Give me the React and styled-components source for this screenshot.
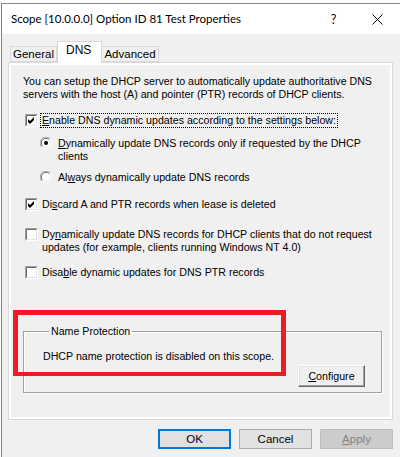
import React from "react";
import styled, { createGlobalStyle } from "styled-components";

const GlobalStyle = createGlobalStyle`
  html, body {
    margin: 0;
    padding: 0;
    background: #ffffff;
  }
  body {
    font-family: "Liberation Sans", Arial, sans-serif;
    font-size: 10.65px;
    color: #000;
  }
`;

const Window = styled.div`
  margin: 3px 0 0 1px;
  height: 454px;
  border-top: 1px solid #8a8a8a;
  border-left: 1px solid #808080;
  background: #f0f0f0;
  display: flex;
  flex-direction: column;
  box-sizing: border-box;
`;

const TitleBar = styled.div`
  height: 30px;
  background: #ffffff;
  display: flex;
  align-items: center;
  padding-left: 9px;
`;

const Title = styled.div`
  flex: 1;
  font-family: Lato, "Noto Sans", sans-serif;
  font-size: 11.5px;
  line-height: 16px;
`;

const TitleButton = styled.div`
  width: ${(p) => p.$w}px;
  display: flex;
  justify-content: center;
  font-family: Lato, "Noto Sans", sans-serif;
  font-size: 12.5px;
`;

const Body = styled.div`
  flex: 1;
  padding: 7px 7px 0 6px;
  display: flex;
  flex-direction: column;
`;

const TabStrip = styled.div`
  display: flex;
  align-items: flex-end;
  height: 21px;
  padding-left: 2px;
  position: relative;
  z-index: 1;
`;

const Tab = styled.div`
  box-sizing: border-box;
  width: ${(p) => p.$w}px;
  height: ${(p) => (p.$active ? 22 : 16)}px;
  margin-bottom: ${(p) => (p.$active ? -1 : 0)}px;
  border: 1px solid #d9d9d9;
  border-bottom: ${(p) => (p.$active ? "none" : "1px solid #d9d9d9")};
  border-left: ${(p) => (p.$first || p.$active ? "1px solid #d9d9d9" : "none")};
  background: ${(p) => (p.$active ? "#ffffff" : "#f0f0f0")};
  display: flex;
  justify-content: ${(p) => (p.$active ? "flex-start" : "center")};
  padding-left: ${(p) => (p.$active ? 8 : 0)}px;
  padding-top: ${(p) => (p.$active ? 2 : 1)}px;
  line-height: 13px;
  font-size: ${(p) => (p.$active ? 12 : 11.5)}px;
`;

const Panel = styled.div`
  box-sizing: border-box;
  height: 358px;
  border: 1px solid #d9d9d9;
  box-shadow: inset 0 0 0 2px #ffffff;
  background: #f0f0f0;
  padding: 12px 10px 0 14px;
  display: flex;
  flex-direction: column;
  position: relative;
`;

const Para = styled.div`
  line-height: 13px;
  white-space: nowrap;
`;

const Option = styled.div`
  display: flex;
  align-items: flex-start;
  margin-top: ${(p) => p.$top}px;
  margin-left: ${(p) => p.$indent}px;
  line-height: 13px;
  white-space: nowrap;
`;

const OptionText = styled.span`
  margin-left: ${(p) => p.$gap}px;
  ${(p) =>
    p.$focus &&
    `outline: 1px dotted #000; outline-offset: 0px; padding: 0 1px; margin-left: ${
      p.$gap - 1
    }px;`}
`;

const BoxFrame = styled.span`
  flex: none;
  display: block;
  width: 13px;
  height: 13px;
`;

const GroupBox = styled.fieldset`
  margin: 46px 0 0 0;
  padding: 0 16px 5px 19px;
  border: 1px solid #a0a0a0;
  box-shadow: 1px 1px 0 #ffffff, inset 1px 1px 0 #ffffff;
  display: flex;
  flex-direction: column;
  min-width: 0;
`;

const Legend = styled.legend`
  margin-left: 6px;
  padding: 0 2px;
  line-height: 13px;
`;

const GroupText = styled.div`
  margin-top: 12px;
  line-height: 13px;
`;

const ClassicButton = styled.button`
  align-self: flex-end;
  margin-top: 2px;
  width: 67px;
  height: 22px;
  box-sizing: border-box;
  font: inherit;
  color: #000;
  background: #f0f0f0;
  border: 1px solid;
  border-color: #ffffff #696969 #696969 #ffffff;
  box-shadow: inset -1px -1px 0 #a0a0a0, inset 1px 1px 0 #e3e3e3;
  padding: 0;
`;

const Annotation = styled.div`
  position: absolute;
  left: 4px;
  top: 247px;
  width: 273px;
  height: 66px;
  box-sizing: border-box;
  border: 5px solid #ed1c24;
  border-bottom-width: 4px;
  pointer-events: none;
`;

const ButtonRow = styled.div`
  display: flex;
  justify-content: flex-end;
  gap: 8px;
  margin-top: 9px;
`;

const DialogButton = styled.button`
  width: 73px;
  height: 20px;
  box-sizing: border-box;
  padding: 0;
  font: inherit;
  font-size: 11.5px;
  background: ${(p) => (p.$disabled ? "#cccccc" : "#e1e1e1")};
  color: ${(p) => (p.$disabled ? "#838383" : "#000")};
  border: ${(p) =>
    p.$default ? "2px solid #0078d7" : p.$disabled ? "1px solid #bfbfbf" : "1px solid #adadad"};
`;

const CheckBox = ({ checked }) => (
  <BoxFrame>
    <svg width="13" height="13" viewBox="0 0 13 13">
      <rect x="0" y="0" width="13" height="13" fill="#ffffff" />
      <path d="M0.5 12.5V0.5H12.5" stroke="#a0a0a0" fill="none" />
      <path d="M1.5 11.5V1.5H11.5" stroke="#696969" fill="none" />
      <path d="M1.5 11.5H11.5V1.5" stroke="#e3e3e3" fill="none" />
      {checked && (
        <path d="M3 5 L5 7 L9 3 L9 6 L5 10 L3 8 Z" fill="#000" />
      )}
    </svg>
  </BoxFrame>
);

const Radio = ({ checked }) => (
  <BoxFrame>
    <svg width="12" height="12" viewBox="0 0 12 12">
      <circle cx="6" cy="6" r="5.5" fill="#ffffff" />
      <path d="M1.8 10.2 A5.5 5.5 0 0 1 10.2 1.8" stroke="#a0a0a0" fill="none" />
      <path d="M2.7 9.3 A4.5 4.5 0 0 1 9.3 2.7" stroke="#696969" fill="none" />
      <path d="M10.2 1.8 A5.5 5.5 0 0 1 1.8 10.2" stroke="#ffffff" fill="none" />
      <path d="M9.3 2.7 A4.5 4.5 0 0 1 2.7 9.3" stroke="#e3e3e3" fill="none" />
      {checked && <circle cx="6" cy="6" r="2" fill="#000" />}
    </svg>
  </BoxFrame>
);

export default function App() {
  return (
    <>
      <GlobalStyle />
      <Window>
        <TitleBar>
          <Title>Scope [10.0.0.0] Option ID 81 Test Properties</Title>
          <TitleButton $w={41}>?</TitleButton>
          <TitleButton $w={46}>
            <svg width="11" height="11" viewBox="0 0 11 11">
              <path d="M0.5 0.5 L10.5 10.5 M10.5 0.5 L0.5 10.5" stroke="#000" strokeWidth="1" />
            </svg>
          </TitleButton>
        </TitleBar>
        <Body>
          <TabStrip>
            <Tab $w={47} $first>General</Tab>
            <Tab $w={45} $active>DNS</Tab>
            <Tab $w={57}>Advanced</Tab>
          </TabStrip>
          <Panel>
            <Para>
              You can setup the DHCP server to automatically update authoritative DNS
              <br />
              servers with the host (A) and pointer (PTR) records of DHCP clients.
            </Para>
            <Option $top={13} $indent={2}>
              <CheckBox checked />
              <OptionText $gap={4} $focus>
                <u>E</u>nable DNS dynamic updates according to the settings below:
              </OptionText>
            </Option>
            <Option $top={10} $indent={17}>
              <Radio checked />
              <OptionText $gap={5}>
                <u>D</u>ynamically update DNS records only if requested by the DHCP
                <br />
                clients
              </OptionText>
            </Option>
            <Option $top={8} $indent={17}>
              <Radio />
              <OptionText $gap={5}>
                Al<u>w</u>ays dynamically update DNS records
              </OptionText>
            </Option>
            <Option $top={14} $indent={2}>
              <CheckBox checked />
              <OptionText $gap={4}>
                Di<u>s</u>card A and PTR records when lease is deleted
              </OptionText>
            </Option>
            <Option $top={17} $indent={2}>
              <CheckBox />
              <OptionText $gap={4}>
                Dy<u>n</u>amically update DNS records for DHCP clients that do not request
                <br />
                updates (for example, clients running Windows NT 4.0)
              </OptionText>
            </Option>
            <Option $top={12} $indent={2}>
              <CheckBox />
              <OptionText $gap={4}>
                Disa<u>b</u>le dynamic updates for DNS PTR records
              </OptionText>
            </Option>
            <GroupBox>
              <Legend>Name Protection</Legend>
              <GroupText>DHCP name protection is disabled on this scope.</GroupText>
              <ClassicButton>
                <u>C</u>onfigure
              </ClassicButton>
            </GroupBox>
            <Annotation />
          </Panel>
          <ButtonRow>
            <DialogButton $default>OK</DialogButton>
            <DialogButton>Cancel</DialogButton>
            <DialogButton $disabled>
              <u>A</u>pply
            </DialogButton>
          </ButtonRow>
        </Body>
      </Window>
    </>
  );
}
